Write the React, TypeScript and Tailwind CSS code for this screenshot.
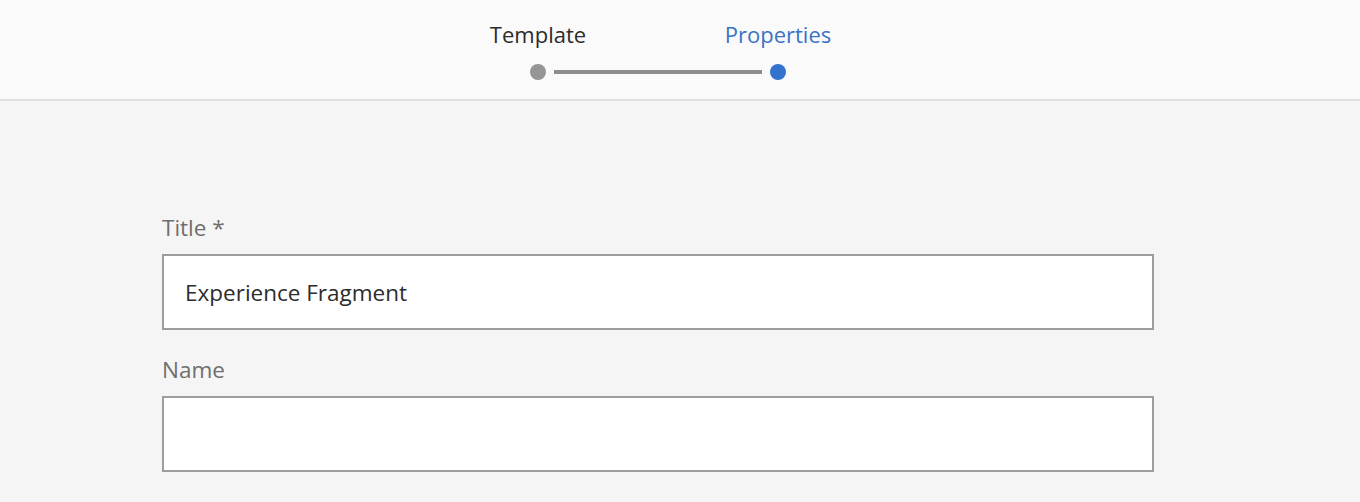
import { useState } from 'react';

const STEPS = [
  { label: 'Template', done: true },
  { label: 'Properties', current: true },
];

export default function App() {
  const [title, setTitle] = useState('Experience Fragment');
  const [name, setName] = useState('');

  return (
    <div className="min-h-screen bg-[#f5f5f5] text-[#2c2c2c]" style={{ fontFamily: '"Open Sans", "Liberation Sans", sans-serif' }}>
      {/* Wizard steps */}
      <div className="h-[101px] bg-[#fafafa] border-b-2 border-[#e1e1e1] flex justify-center pr-[44px] pt-[19px]">
        <div className="flex">
          {STEPS.map((s, i) => (
            <div key={s.label} className="w-[240px] flex flex-col items-center">
              <span className={`text-[22px] leading-[30px] ${s.current ? 'text-[#3b73c6]' : 'text-[#2c2c2c]'}`}>
                {s.label}
              </span>
              <div className="relative mt-[15px] w-full h-4 flex justify-center">
                {i > 0 && (
                  <div className="absolute right-[136px] top-[6px] w-[208px] h-[4px] bg-[#8e8e8e]" />
                )}
                <div className={`w-4 h-4 rounded-full ${s.current ? 'bg-[#3572ce]' : 'bg-[#959595]'}`} />
              </div>
            </div>
          ))}
        </div>
      </div>

      {/* Form */}
      <div className="pl-[162px] pt-[111px] w-[1154px]">
        <label className="block text-[22.5px] leading-[32px] text-[#6e6e6e] mb-[10px]">Title *</label>
        <input
          value={title}
          onChange={e => setTitle(e.target.value)}
          className="w-[992px] h-[76px] bg-white border-2 border-[#9d9d9d] px-[21px] text-[22.5px] text-[#2c2c2c] outline-none"
        />
        <label className="block text-[22.5px] leading-[32px] text-[#6e6e6e] mt-[24px] mb-[10px]">Name</label>
        <input
          value={name}
          onChange={e => setName(e.target.value)}
          className="w-[992px] h-[76px] bg-white border-2 border-[#9d9d9d] px-[21px] text-[22.5px] text-[#2c2c2c] outline-none"
        />
      </div>
    </div>
  );
}
